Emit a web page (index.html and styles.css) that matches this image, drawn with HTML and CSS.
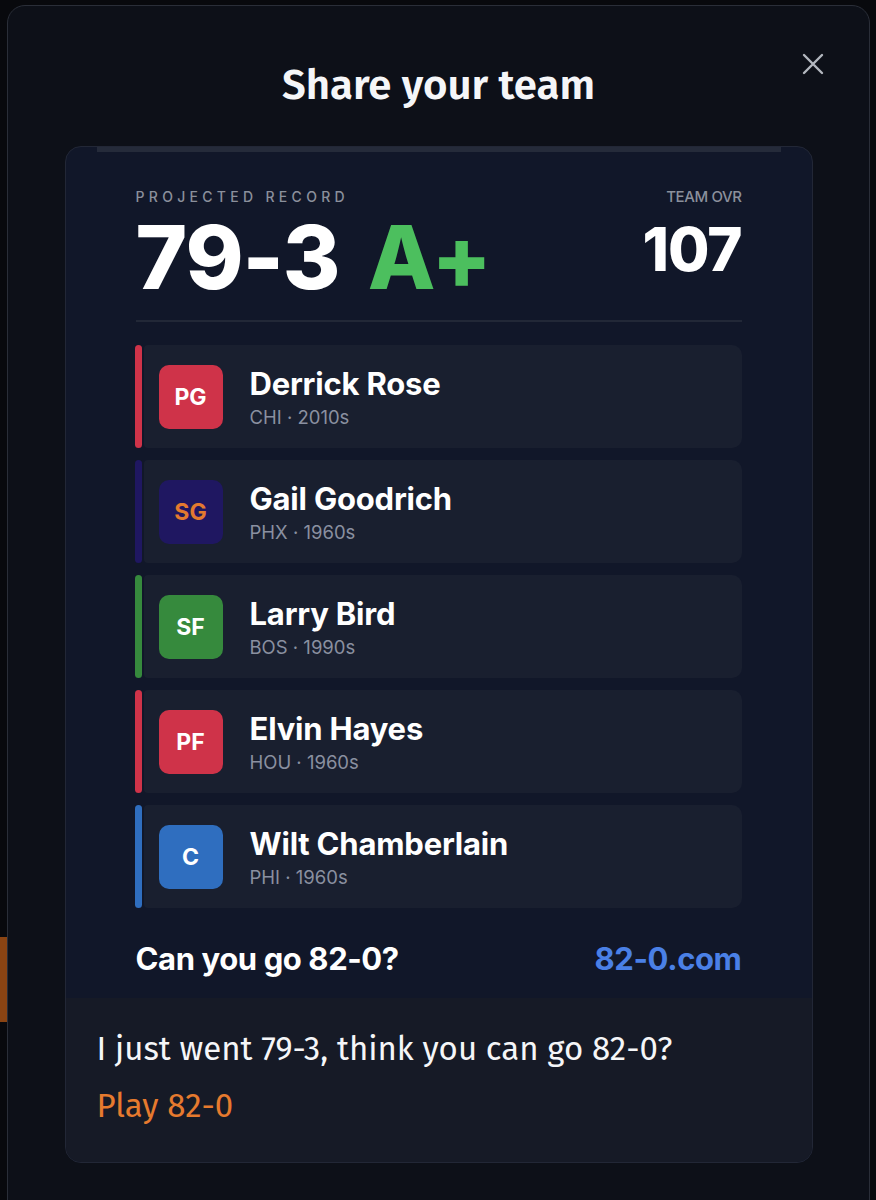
FILE: index.html
```html
<!DOCTYPE html>
<html lang="en">
<head>
  <meta charset="UTF-8" />
  <title>Share your team</title>
  <link rel="stylesheet" href="styles.css">
</head>
<body>

<div class="behind-tab"></div>

<div class="modal">
  <button class="close-btn" aria-label="Close">
    <svg width="22" height="22" viewBox="0 0 22 22">
      <path d="M2 2 L20 20 M20 2 L2 20" stroke="#b3b7bf" stroke-width="2.4" stroke-linecap="round" fill="none" />
    </svg>
  </button>

  <h1 class="modal-title">Share your team</h1>

  <div class="share-card">
    <div class="image-strip"></div>

    <div class="share-image">
      <div class="record-head">
        <div class="record">
          <div class="label label-wide">PROJECTED RECORD</div>
          <div class="record-value">79-3 <span class="grade">A+</span></div>
        </div>
        <div class="ovr">
          <div class="label">TEAM OVR</div>
          <div class="ovr-value">107</div>
        </div>
      </div>

      <div class="divider"></div>

      <ul class="roster">
        <li class="player">
          <span class="accent red"></span>
          <div class="player-card">
            <span class="pos red">PG</span>
            <div class="player-info">
              <div class="player-name">Derrick Rose</div>
              <div class="player-meta">CHI · 2010s</div>
            </div>
          </div>
        </li>
        <li class="player">
          <span class="accent indigo"></span>
          <div class="player-card">
            <span class="pos indigo">SG</span>
            <div class="player-info">
              <div class="player-name">Gail Goodrich</div>
              <div class="player-meta">PHX · 1960s</div>
            </div>
          </div>
        </li>
        <li class="player">
          <span class="accent green"></span>
          <div class="player-card">
            <span class="pos green">SF</span>
            <div class="player-info">
              <div class="player-name">Larry Bird</div>
              <div class="player-meta">BOS · 1990s</div>
            </div>
          </div>
        </li>
        <li class="player">
          <span class="accent red"></span>
          <div class="player-card">
            <span class="pos red">PF</span>
            <div class="player-info">
              <div class="player-name">Elvin Hayes</div>
              <div class="player-meta">HOU · 1960s</div>
            </div>
          </div>
        </li>
        <li class="player">
          <span class="accent blue"></span>
          <div class="player-card">
            <span class="pos blue">C</span>
            <div class="player-info">
              <div class="player-name">Wilt Chamberlain</div>
              <div class="player-meta">PHI · 1960s</div>
            </div>
          </div>
        </li>
      </ul>

      <div class="image-footer">
        <span>Can you go 82-0?</span>
        <span class="site">82-0.com</span>
      </div>
    </div>

    <div class="share-text">
      <p>I just went 79-3, think you can go 82-0?</p>
      <a href="#" class="play-link">Play 82-0</a>
    </div>
  </div>
</div>

</body>
</html>
```

FILE: styles.css
```css
body {
  margin: 0;
  background: #08090d;
  font-family: "Fira Sans", Lato, "Noto Sans", sans-serif;
  overflow: hidden;
}

.behind-tab {
  position: absolute;
  left: 0;
  top: 937px;
  width: 7px;
  height: 85px;
  background: #8a4413;
}

.modal {
  position: relative;
  margin: 5px 6px 0 7px;
  min-height: 1220px;
  background: #0d1018;
  border: 1px solid #2a2e38;
  border-radius: 18px 18px 0 0;
  padding-top: 55px;
}

.close-btn {
  position: absolute;
  top: 46px;
  right: 44px;
  width: 24px;
  height: 24px;
  padding: 0;
  border: none;
  background: none;
  display: flex;
  align-items: center;
  justify-content: center;
}

.modal-title {
  margin: 0;
  text-align: center;
  color: #f5f6f8;
  font-size: 42px;
  line-height: 48px;
  font-weight: 600;
}

.share-card {
  width: 746px;
  margin: 37px auto 0;
  border: 1px solid #222736;
  border-radius: 16px;
  overflow: hidden;
  background: #111729;
}

.image-strip {
  height: 5px;
  margin: 0 31px;
  background: #252b3a;
}

.share-image {
  padding: 37px 70px 21px;
  font-family: Inter, "Liberation Sans", sans-serif;
  color: #fff;
}

.record-head {
  display: flex;
  justify-content: space-between;
}

.label {
  font-size: 15px;
  line-height: 16px;
  font-weight: 500;
  color: #8b909c;
  letter-spacing: -0.4px;
}

.label-wide {
  font-size: 14px;
  letter-spacing: 4.3px;
}

.record-value {
  margin-top: 8px;
  font-size: 88px;
  line-height: 88px;
  font-weight: 800;
  letter-spacing: -1px;
}

.grade {
  color: #4cbf5e;
  margin-left: 10px;
}

.ovr {
  text-align: right;
}

.ovr-value {
  margin-top: 14px;
  font-size: 60px;
  line-height: 60px;
  font-weight: 800;
  letter-spacing: -1px;
}

.divider {
  height: 2px;
  margin-top: 19px;
  background: #222837;
}

.roster {
  list-style: none;
  margin: 23px 0 0 -1px;
  padding: 0;
  display: flex;
  flex-direction: column;
  gap: 12px;
}

.player {
  display: flex;
  gap: 2px;
  height: 103px;
}

.accent {
  width: 7px;
  border-radius: 4px;
}

.player-card {
  flex: 1;
  display: flex;
  align-items: center;
  gap: 27px;
  padding-left: 15px;
  background: #191f2f;
  border-radius: 4px 10px 10px 4px;
}

.pos {
  width: 64px;
  height: 64px;
  border-radius: 10px;
  display: flex;
  align-items: center;
  justify-content: center;
  font-size: 23px;
  font-weight: 700;
  color: #fff;
}

.red { background: #cf3349; }
.indigo { background: #1f1761; }
.green { background: #368a3d; }
.blue { background: #2f6ebf; }

.pos.indigo {
  color: #e37a2f;
}

.player-info {
  display: flex;
  flex-direction: column;
  gap: 4px;
  margin-top: 2px;
}

.player-name {
  font-size: 31px;
  line-height: 34px;
  font-weight: 700;
  letter-spacing: -0.2px;
}

.player-meta {
  font-size: 18.5px;
  line-height: 24px;
  color: #8a90a0;
}

.image-footer {
  display: flex;
  justify-content: space-between;
  margin-top: 33px;
  font-size: 31px;
  line-height: 36px;
  font-weight: 700;
  letter-spacing: -0.4px;
}

.site {
  color: #4a80e6;
}

.share-text {
  background: #161a26;
  padding: 31px 31px 36px;
}

.share-text p {
  margin: 0 0 17px;
  color: #f5f6f8;
  font-size: 33px;
  line-height: 40px;
}

.play-link {
  color: #e67a2e;
  font-size: 33px;
  line-height: 40px;
  text-decoration: none;
}
```
